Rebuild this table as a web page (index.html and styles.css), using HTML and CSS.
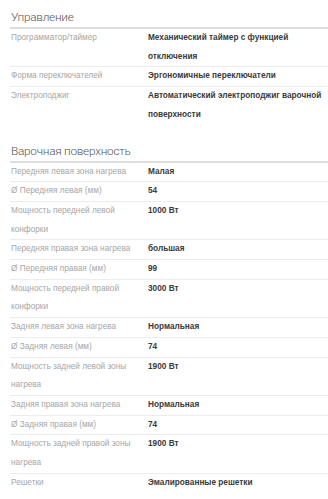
FILE: index.html
```html
<!DOCTYPE html>
<html lang="ru">
<head>
<meta charset="utf-8">
<link rel="stylesheet" href="styles.css">
</head>
<body>
<div class="page">
  <section class="group">
    <h2 class="group-title">Управление</h2>
    <div class="specs">
      <div class="row"><div class="label">Программатор/таймер</div><div class="value">Механический таймер с функцией отключения</div></div>
      <div class="row"><div class="label">Форма переключателей</div><div class="value">Эргономичные переключатели</div></div>
      <div class="row"><div class="label">Электроподжиг</div><div class="value">Автоматический электроподжиг варочной поверхности</div></div>
    </div>
  </section>
  <section class="group">
    <h2 class="group-title">Варочная поверхность</h2>
    <div class="specs">
      <div class="row"><div class="label">Передняя левая зона нагрева</div><div class="value">Малая</div></div>
      <div class="row"><div class="label">Ø Передняя левая (мм)</div><div class="value">54</div></div>
      <div class="row"><div class="label">Мощность передней левой конфорки</div><div class="value">1000 Вт</div></div>
      <div class="row"><div class="label">Передняя правая зона нагрева</div><div class="value">большая</div></div>
      <div class="row"><div class="label">Ø Передняя правая (мм)</div><div class="value">99</div></div>
      <div class="row"><div class="label">Мощность передней правой конфорки</div><div class="value">3000 Вт</div></div>
      <div class="row"><div class="label">Задняя левая зона нагрева</div><div class="value">Нормальная</div></div>
      <div class="row"><div class="label">Ø Задняя левая (мм)</div><div class="value">74</div></div>
      <div class="row"><div class="label">Мощность задней левой зоны нагрева</div><div class="value">1900 Вт</div></div>
      <div class="row"><div class="label">Задняя правая зона нагрева</div><div class="value">Нормальная</div></div>
      <div class="row"><div class="label">Ø Задняя правая (мм)</div><div class="value">74</div></div>
      <div class="row"><div class="label">Мощность задней правой зоны нагрева</div><div class="value">1900 Вт</div></div>
      <div class="row"><div class="label">Решетки</div><div class="value">Эмалированные решетки</div></div>
    </div>
  </section>
</div>
</body>
</html>
```
FILE: styles.css
```css
html, body {
  margin: 0;
  padding: 0;
  background: #ffffff;
}
body {
  font-family: "Liberation Sans", Arial, sans-serif;
}
.page {
  padding: 9px 0 0 10px;
}
.group + .group {
  margin-top: 18px;
}
.group-title {
  margin: 0;
  font-family: Roboto, "Liberation Sans", Arial, sans-serif;
  font-size: 11.8px;
  letter-spacing: -0.25px;
  line-height: 16px;
  font-weight: 300;
  color: #555;
  padding: 0 0 2px 1px;
  border-bottom: 2px solid #dddddd;
}
.row {
  display: grid;
  grid-template-columns: 137px 1fr;
  line-height: 18.7px;
  border-top: 1px solid #ececec;
}
.row:first-child {
  border-top: none;
}
.label {
  padding: 0 8px 0 1px;
  font-size: 8.25px;
  color: #a6a6a6;
}
.value {
  padding: 0 0 0 1px;
  font-size: 8.25px;
  font-weight: bold;
  color: #3a3a3a;
}
```
